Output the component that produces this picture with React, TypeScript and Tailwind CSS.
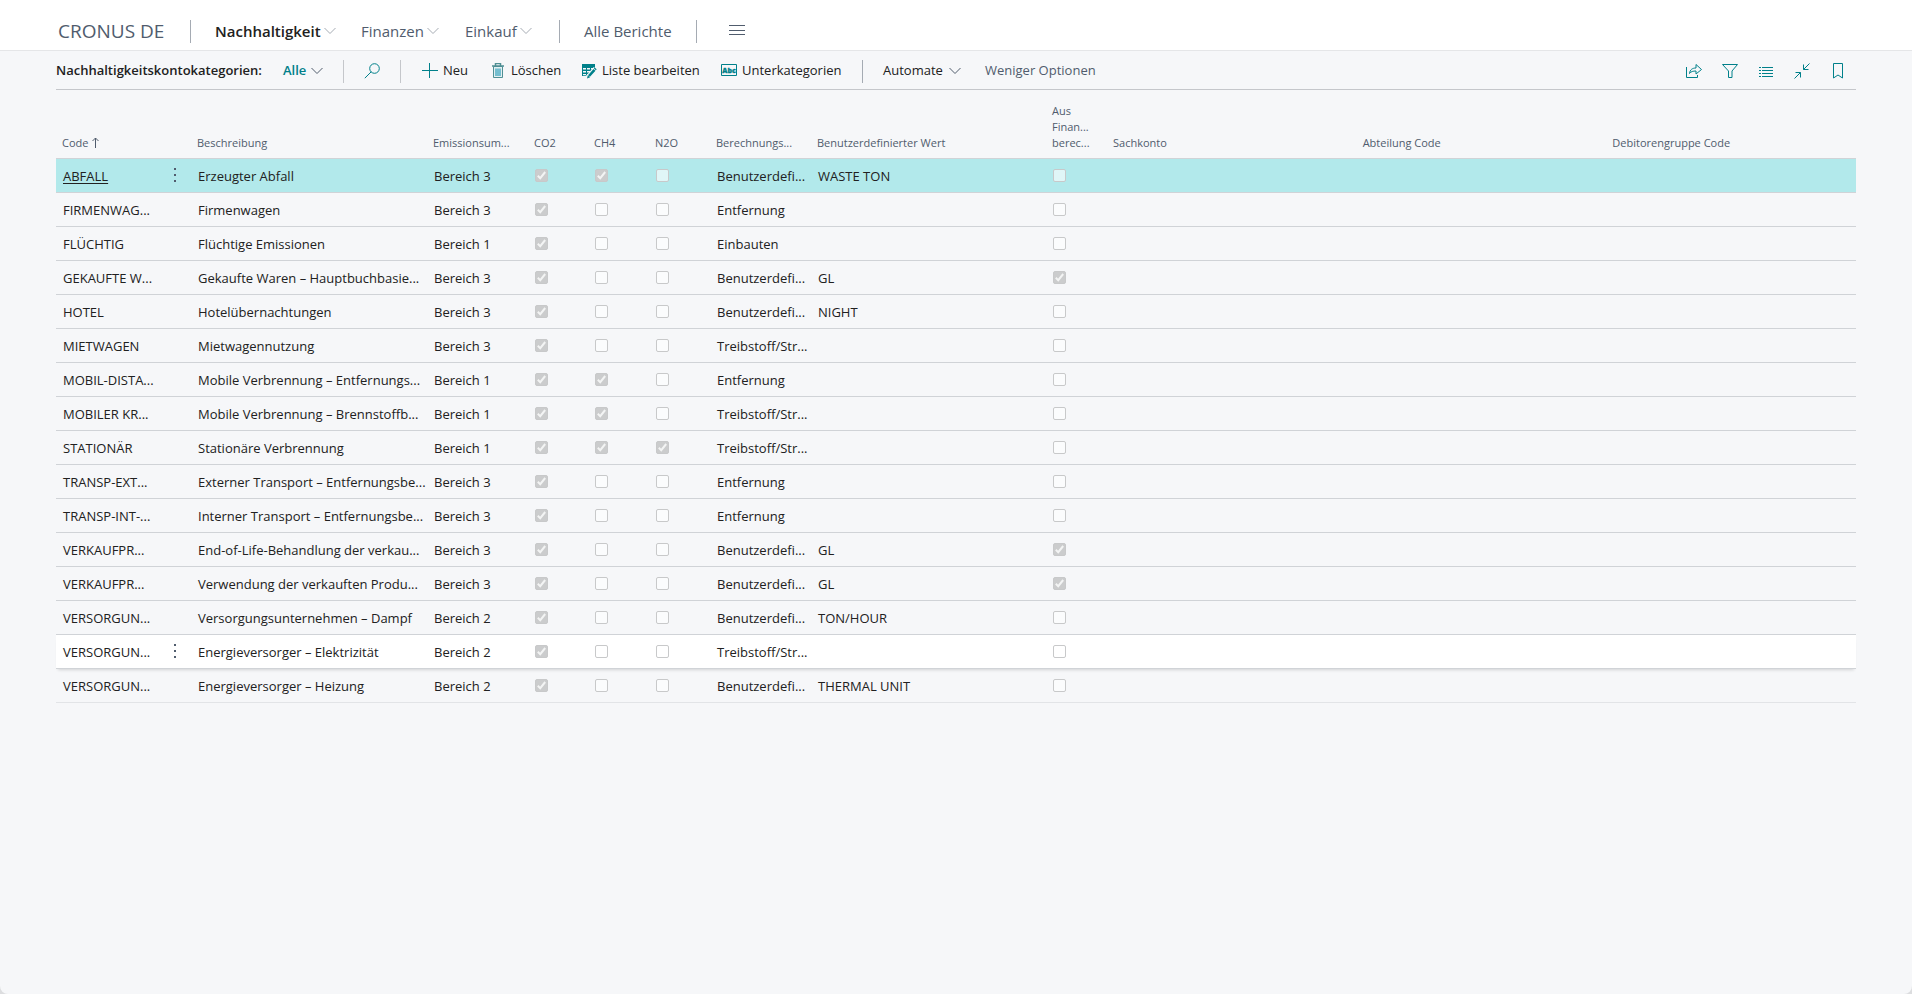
import React from 'react';

type Row = {
  code: string;
  description: string;
  scope: string;
  co2?: boolean;
  ch4?: boolean;
  n2o?: boolean;
  calc: string;
  custom?: string;
  fromFinance?: boolean;
  state?: 'selected' | 'hover';
};

const rows: Row[] = [
  { code: 'ABFALL', description: 'Erzeugter Abfall', scope: 'Bereich 3', co2: true, ch4: true, calc: 'Benutzerdefi...', custom: 'WASTE TON', state: 'selected' },
  { code: 'FIRMENWAG...', description: 'Firmenwagen', scope: 'Bereich 3', co2: true, calc: 'Entfernung' },
  { code: 'FLÜCHTIG', description: 'Flüchtige Emissionen', scope: 'Bereich 1', co2: true, calc: 'Einbauten' },
  { code: 'GEKAUFTE W...', description: 'Gekaufte Waren – Hauptbuchbasie...', scope: 'Bereich 3', co2: true, calc: 'Benutzerdefi...', custom: 'GL', fromFinance: true },
  { code: 'HOTEL', description: 'Hotelübernachtungen', scope: 'Bereich 3', co2: true, calc: 'Benutzerdefi...', custom: 'NIGHT' },
  { code: 'MIETWAGEN', description: 'Mietwagennutzung', scope: 'Bereich 3', co2: true, calc: 'Treibstoff/Str...' },
  { code: 'MOBIL-DISTA...', description: 'Mobile Verbrennung – Entfernungs...', scope: 'Bereich 1', co2: true, ch4: true, calc: 'Entfernung' },
  { code: 'MOBILER KR...', description: 'Mobile Verbrennung – Brennstoffb...', scope: 'Bereich 1', co2: true, ch4: true, calc: 'Treibstoff/Str...' },
  { code: 'STATIONÄR', description: 'Stationäre Verbrennung', scope: 'Bereich 1', co2: true, ch4: true, n2o: true, calc: 'Treibstoff/Str...' },
  { code: 'TRANSP-EXT...', description: 'Externer Transport – Entfernungsbe...', scope: 'Bereich 3', co2: true, calc: 'Entfernung' },
  { code: 'TRANSP-INT-...', description: 'Interner Transport – Entfernungsbe...', scope: 'Bereich 3', co2: true, calc: 'Entfernung' },
  { code: 'VERKAUFPR...', description: 'End-of-Life-Behandlung der verkau...', scope: 'Bereich 3', co2: true, calc: 'Benutzerdefi...', custom: 'GL', fromFinance: true },
  { code: 'VERKAUFPR...', description: 'Verwendung der verkauften Produ...', scope: 'Bereich 3', co2: true, calc: 'Benutzerdefi...', custom: 'GL', fromFinance: true },
  { code: 'VERSORGUN...', description: 'Versorgungsunternehmen – Dampf', scope: 'Bereich 2', co2: true, calc: 'Benutzerdefi...', custom: 'TON/HOUR' },
  { code: 'VERSORGUN...', description: 'Energieversorger – Elektrizität', scope: 'Bereich 2', co2: true, calc: 'Treibstoff/Str...', state: 'hover' },
  { code: 'VERSORGUN...', description: 'Energieversorger – Heizung', scope: 'Bereich 2', co2: true, calc: 'Benutzerdefi...', custom: 'THERMAL UNIT' },
];

const rowStyles = {
  selected: 'bg-[#b2e9eb]',
  hover: 'bg-white shadow-[0_4px_3px_-2px_rgba(0,0,0,0.15)]',
};

const Chevron = ({ className }: { className?: string }) => (
  <svg viewBox="0 0 12 8" className={`h-2 w-3 shrink-0 ${className ?? ''}`} fill="none" stroke="currentColor" aria-hidden="true">
    <path d="M.5 1 6 6.5 11.5 1" />
  </svg>
);

const Icon = ({ children }: { children: React.ReactNode }) => (
  <svg viewBox="0 0 16 16" className="size-4 shrink-0 text-[#00808a]" fill="none" stroke="currentColor" aria-hidden="true">
    {children}
  </svg>
);

const TextCell = ({ children }: { children?: React.ReactNode }) => (
  <td className="px-[7px] pt-[3px]">{children}</td>
);

const CheckCell = ({ checked, label }: { checked?: boolean; label: string }) => (
  <td className="px-[7px]">
    <span className="relative block size-[13px]">
      <input
        type="checkbox"
        checked={!!checked}
        disabled
        readOnly
        aria-label={label}
        className="block size-[13px] appearance-none rounded-[2px] border border-[#c8c9ca] bg-white/60 checked:bg-[#cbcccd]"
      />
      {checked && (
        <svg viewBox="0 0 13 13" className="absolute inset-0 size-[13px]" fill="none" stroke="#f3f4f4" strokeWidth="2" aria-hidden="true">
          <path d="M2.800 6.800 5.200 9.200 10.200 3" />
        </svg>
      )}
    </span>
  </td>
);

const Header = () => (
  <header className="flex h-[51px] items-center border-b border-[#e5e6e8] bg-white pt-3 pl-[58px] text-[15px] text-[#505c6d]">
    <a href="#home" className="w-[132px] text-[19px]">CRONUS DE</a>
    <nav className="flex items-center whitespace-nowrap">
      <span className="h-[23px] w-px bg-[#a5abb3]" />
      <a href="#nachhaltigkeit" className="ml-6 flex w-[146px] items-center font-semibold text-[#212121]">
        Nachhaltigkeit
        <Chevron className="ml-[3px] text-[#a5abb3]" />
      </a>
      <a href="#finanzen" className="flex w-[104px] items-center">
        Finanzen
        <Chevron className="ml-[3px] text-[#a5abb3]" />
      </a>
      <a href="#einkauf" className="flex w-[94px] items-center">
        Einkauf
        <Chevron className="ml-[3px] text-[#a5abb3]" />
      </a>
      <span className="h-[23px] w-px bg-[#a5abb3]" />
      <a href="#berichte" className="ml-6 w-[112px]">Alle Berichte</a>
      <span className="h-[23px] w-px bg-[#a5abb3]" />
      <button type="button" aria-label="Menü" className="ml-8">
        <svg viewBox="0 0 16 16" className="size-4" stroke="currentColor" aria-hidden="true">
          <path d="M0 2.5h16M0 7.5h16M0 11.5h16" />
        </svg>
      </button>
    </nav>
  </header>
);

const Toolbar = () => (
  <div className="flex h-[39px] items-center border-b border-[#c5c7cb] pt-0.5 whitespace-nowrap">
    <h1 className="w-[227px] text-[13px] font-semibold">Nachhaltigkeitskontokategorien:</h1>
    <button type="button" className="flex w-[60px] items-center gap-[5px] font-semibold text-[#00808a]">
      Alle
      <Chevron className="text-[#505c6d]" />
    </button>
    <span className="h-[23px] w-px bg-[#c5c7cb]" />
    <button type="button" aria-label="Suchen" className="ml-5 w-9">
      <Icon>
        <circle cx="10.500" cy="5.500" r="4.800" />
        <path d="M7.200 8.800.800 15.200" />
      </Icon>
    </button>
    <span className="h-[23px] w-px bg-[#c5c7cb]" />
    <button type="button" className="ml-[21px] flex w-[68px] items-center gap-[5px]">
      <Icon>
        <path d="M0 7.500h16M7.500 0v15" />
      </Icon>
      Neu
    </button>
    <button type="button" className="flex w-[91px] items-center gap-[5px]">
      <Icon>
        <path d="M3.500 3.500h9v11h-9z" fill="#e3eff1" stroke="#4f8f94" />
        <path d="M2 3h12M5.500 2.500V.500h5v2" stroke="#4f8f94" strokeWidth="1.500" />
        <path d="M6 5.500v7.500M8 5.500v7.500M10 5.500v7.500" stroke="#2b9db9" strokeWidth="1.200" />
      </Icon>
      Löschen
    </button>
    <button type="button" className="flex w-[140px] items-center gap-[5px]">
      <Icon>
        <path d="M1 1h13v4l-6 8H1z" fill="currentColor" stroke="none" />
        <path d="M2 5h3v1.500H2zM6 5h3v1.500H6zM10 5h3v1.500h-3zM2 8h3v1.500H2zM6 8h3v1.500H6zM2 11h3v1.200H2zM6 11h2v1.200H6z" fill="#f6f7f9" stroke="none" />
        <path d="m6.500 14.500 8-9" stroke="#f6f7f9" strokeWidth="4.500" />
        <path d="m8 13 5.500-6.200M13.900 6.300l.8-.9" strokeWidth="2.600" />
        <path d="m6 15.500.800-3.200 2.400 2z" fill="currentColor" stroke="none" />
      </Icon>
      Liste bearbeiten
    </button>
    <button type="button" className="flex w-[141px] items-center gap-[5px]">
      <Icon>
        <path d="M.5 1.500h15v11H.5z" />
        <text x="8" y="10" textAnchor="middle" fontSize="7" fontWeight="800" fill="currentColor" strokeWidth=".3">Abc</text>
      </Icon>
      Unterkategorien
    </button>
    <span className="h-[23px] w-px bg-[#a5abb3]" />
    <button type="button" className="ml-5 flex w-[102px] items-center gap-[6px]">
      Automate
      <Chevron className="text-[#505c6d]" />
    </button>
    <button type="button" className="text-[#505c6d]">Weniger Optionen</button>
    <div className="mr-[10px] ml-auto flex gap-5">
      <button type="button" aria-label="Teilen">
        <Icon>
          <path d="M.5 4v10.500h11V12M3.500 10.500c.5-4 3-5.500 6.500-5.500V1.500l5.500 5L10 11V8c-3 0-5 .5-6.500 2.500z" />
        </Icon>
      </button>
      <button type="button" aria-label="Filter">
        <Icon>
          <path d="M.5 1.500h15L10 8v6.500H6.500V8z" />
        </Icon>
      </button>
      <button type="button" aria-label="Liste">
        <Icon>
          <path d="M1 4.500h2M4 4.500h11M1 7.500h2M4 7.500h11M1 10.500h2M4 10.500h11M1 13.500h2M4 13.500h11" />
        </Icon>
      </button>
      <button type="button" aria-label="Verkleinern">
        <Icon>
          <path d="M15.500.5 9.500 6.500M9.500 1.500v5h5M.5 15.500l6-6M1.500 9.500h5v5" />
        </Icon>
      </button>
      <button type="button" aria-label="Lesezeichen">
        <Icon>
          <path d="M3.500.5h9v14.500L8 12l-4.500 3z" />
        </Icon>
      </button>
    </div>
  </div>
);

const CategoryTable = () => (
  <table className="w-full table-fixed border-collapse text-left whitespace-nowrap">
    <colgroup>
      <col className="w-[102px]" />
      <col className="w-[33px]" />
      <col className="w-[236px]" />
      <col className="w-[101px]" />
      <col className="w-[60px]" />
      <col className="w-[61px]" />
      <col className="w-[61px]" />
      <col className="w-[101px]" />
      <col className="w-[235px]" />
      <col className="w-[61px]" />
      <col />
      <col />
      <col />
    </colgroup>
    <thead>
      <tr className="h-[68px] border-b border-[#d0d3d7] align-bottom text-[11px] leading-4 text-[#505c6d] [&>th]:px-[6px] [&>th]:pb-[7px] [&>th]:font-normal">
        <th scope="col">
          <span className="flex items-center gap-1">
            Code
            <svg viewBox="0 0 7 11" className="h-[11px] w-[7px]" fill="none" stroke="currentColor" aria-hidden="true">
              <path d="M3.500 11V1M.5 4l3-3 3 3" />
            </svg>
          </span>
        </th>
        <td />
        <th scope="col">Beschreibung</th>
        <th scope="col">Emissionsum...</th>
        <th scope="col">CO2</th>
        <th scope="col">CH4</th>
        <th scope="col">N2O</th>
        <th scope="col">Berechnungs...</th>
        <th scope="col">Benutzerdefinierter Wert</th>
        <th scope="col">
          Aus
          <br />
          Finan...
          <br />
          berec...
        </th>
        <th scope="col">Sachkonto</th>
        <th scope="col">Abteilung Code</th>
        <th scope="col">Debitorengruppe Code</th>
      </tr>
    </thead>
    <tbody>
      {rows.map((row, i) => (
        <tr key={i} className={`h-[34px] border-b border-[#d0d3d7] last:border-[#e2e4e7] ${row.state ? rowStyles[row.state] : ''}`}>
          <TextCell>
            {row.state === 'selected' ? (
              <a href="#abfall" className="underline underline-offset-2">{row.code}</a>
            ) : (
              row.code
            )}
          </TextCell>
          <td>
            {row.state && (
              <button type="button" aria-label="Weitere Optionen" className="mx-auto block">
                <svg viewBox="0 0 16 16" className="size-4" fill="#505c6d" aria-hidden="true">
                  <path d="M7 1h2v2H7zM7 7h2v2H7zM7 13h2v2H7z" />
                </svg>
              </button>
            )}
          </td>
          <TextCell>{row.description}</TextCell>
          <TextCell>{row.scope}</TextCell>
          <CheckCell checked={row.co2} label="CO2" />
          <CheckCell checked={row.ch4} label="CH4" />
          <CheckCell checked={row.n2o} label="N2O" />
          <TextCell>{row.calc}</TextCell>
          <TextCell>{row.custom}</TextCell>
          <CheckCell checked={row.fromFinance} label="Aus Finanzen berechnen" />
          <td />
          <td />
          <td />
        </tr>
      ))}
    </tbody>
  </table>
);

export default function App() {
  return (
    <div className="bg-[#dcdddf]">
      <div className="min-h-screen overflow-hidden rounded-b-lg bg-[#f6f7f9] font-['Segoe_UI','Open_Sans',sans-serif] text-[13px] text-[#212121]">
        <Header />
        <main className="mx-14">
          <Toolbar />
          <CategoryTable />
        </main>
      </div>
    </div>
  );
}
